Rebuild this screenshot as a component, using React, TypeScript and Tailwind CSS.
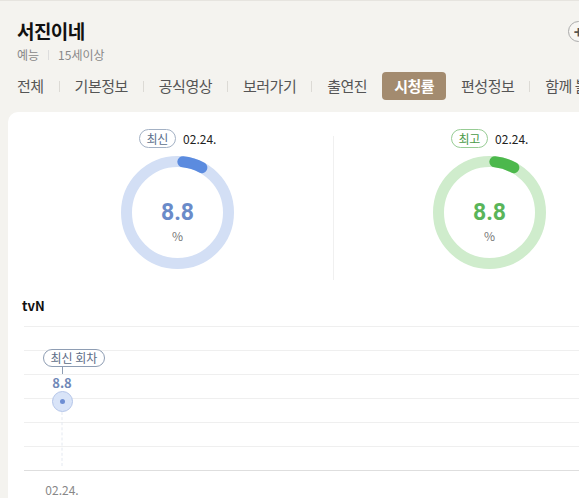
import React from "react";

const FONT = { fontFamily: '"Noto Sans CJK KR", "Noto Sans", sans-serif' };

const TABS = ["전체", "기본정보", "공식영상", "보러가기", "출연진", "시청률", "편성정보", "함께 볼거리"];
const ACTIVE = "시청률";

type GaugeProps = {
  label: string;
  date: string;
  value: string;
  tone: "blue" | "green";
};

function Gauge({ label, date, value, tone }: GaugeProps) {
  const blue = tone === "blue";
  const track = blue ? "#d3dff5" : "#cfeccc";
  const bar = blue ? "#5b8bdf" : "#4cb84c";
  return (
    <div className="flex w-[311px] flex-col items-center pt-[17px]">
      <div className="flex h-[19px] items-center gap-[7px]">
        <span
          className={`flex h-[19px] items-center rounded-full border px-[7px] text-[12px] tracking-[-0.3px] ${
            blue ? "border-[#a3b1c4] text-[#5d6f8c]" : "border-[#97cc94] text-[#4a9a47]"
          }`}
        >
          {label}
        </span>
        <span className="text-[12px] text-[#222]">{date}</span>
      </div>
      <div className="relative mt-[8px] h-[113px] w-[113px]">
        <svg width="113" height="113" viewBox="0 0 113 113" className="absolute inset-0">
          <circle cx="56.5" cy="56.5" r="51" fill="none" stroke={track} strokeWidth="11" />
          <circle
            cx="56.5"
            cy="56.5"
            r="51"
            fill="none"
            stroke={bar}
            strokeWidth="11"
            strokeLinecap="round"
            strokeDasharray="20 400"
            transform="rotate(-84 56.5 56.5)"
          />
        </svg>
        <div className="absolute inset-0 flex flex-col items-center justify-center pt-[20px]">
          <span
            className={`font-['Roboto',sans-serif] text-[23px] font-bold leading-[22px] ${
              blue ? "text-[#6a8bc9]" : "text-[#5ab55a]"
            }`}
          >
            {value}
          </span>
          <span className="mt-[4px] text-[12px] leading-[15px] text-[#777]">%</span>
        </div>
      </div>
    </div>
  );
}

export default function App() {
  return (
    <div className="flex h-[498px] w-[579px] flex-col overflow-hidden border-t border-[#e6e4df] bg-[#f4f3ef]" style={FONT}>
      <div className="pl-[17px]">
        <div className="flex items-center justify-between pt-[17px]">
          <h1 className="text-[19px] font-bold leading-[26px] tracking-[-0.6px] text-[#111]">서진이네</h1>
          <button
            type="button"
            className="mr-[-10px] flex h-[21px] w-[21px] items-center justify-center rounded-full border border-[#aaa] bg-[#f7f6f3] text-[16px] font-bold leading-none text-[#555]"
          >
            +
          </button>
        </div>
        <div className="mt-[3px] flex items-center text-[12px] leading-[16px] text-[#888]">
          <span>예능</span>
          <span className="mx-[9px] h-[10px] w-px bg-[#ddd]" />
          <span>15세이상</span>
        </div>
        <nav className="mt-[9px] flex h-[28px] items-center gap-[15px] whitespace-nowrap text-[15px] tracking-[-0.5px] text-[#555]">
          {TABS.map((tab, i) => {
            const prev = TABS[i - 1];
            const showSep = i > 0 && tab !== ACTIVE && prev !== ACTIVE;
            return (
              <React.Fragment key={tab}>
                {showSep && <span className="h-[11px] w-px shrink-0 bg-[#dcdad5]" />}
                {tab === ACTIVE ? (
                  <span className="flex h-[28px] items-center rounded-[4px] bg-[#a38b6f] px-[12px] font-bold text-white">
                    {tab}
                  </span>
                ) : (
                  <span>{tab}</span>
                )}
              </React.Fragment>
            );
          })}
        </nav>
      </div>

      <div className="ml-[8px] mt-[12px] w-[660px] flex-1 rounded-tl-[10px] bg-white px-[14px]">
        <div className="flex items-start">
          <Gauge label="최신" date="02.24." value="8.8" tone="blue" />
          <div className="mt-[24px] h-[144px] w-px bg-[#f0f0f0]" />
          <Gauge label="최고" date="02.24." value="8.8" tone="green" />
        </div>

        <div className="mt-[17px] text-[13px] font-bold leading-[18px] text-[#111]">tvN</div>

        <div className="relative ml-[2px] mt-[11px]">
          {[0, 1, 2, 3, 4, 5].map((i) => (
            <div key={i} className="h-[24px] border-t border-[#efefef]" />
          ))}
          <div className="border-t border-[#dedede]" />

          <div className="absolute left-[38px] top-[86px] h-[54px] w-0 -translate-x-1/2 border-l border-dashed border-[#e4e9f1]" />
          <div className="absolute left-[19px] top-[23px] flex h-[18px] w-[62px] items-center justify-center rounded-full border border-[#8e9db3] bg-white text-[12px] text-[#5d6d87]">
            최신 회차
          </div>
          <div className="absolute left-[38px] top-[41px] h-[7px] w-px bg-[#8e9db3]" />
          <div className="absolute left-[38px] top-[49px] -translate-x-1/2 text-[13px] font-bold leading-[16px] text-[#7089b8]">
            8.8
          </div>
          <div className="absolute left-[28px] top-[65px] flex h-[21px] w-[21px] items-center justify-center rounded-full border border-[#b4c5e9] bg-[#d9e4f8]">
            <span className="h-[5px] w-[5px] rounded-full bg-[#6e8ed3]" />
          </div>
          <div className="absolute left-[38px] top-[155px] -translate-x-1/2 text-[12px] text-[#888]">02.24.</div>
        </div>
      </div>
    </div>
  );
}
